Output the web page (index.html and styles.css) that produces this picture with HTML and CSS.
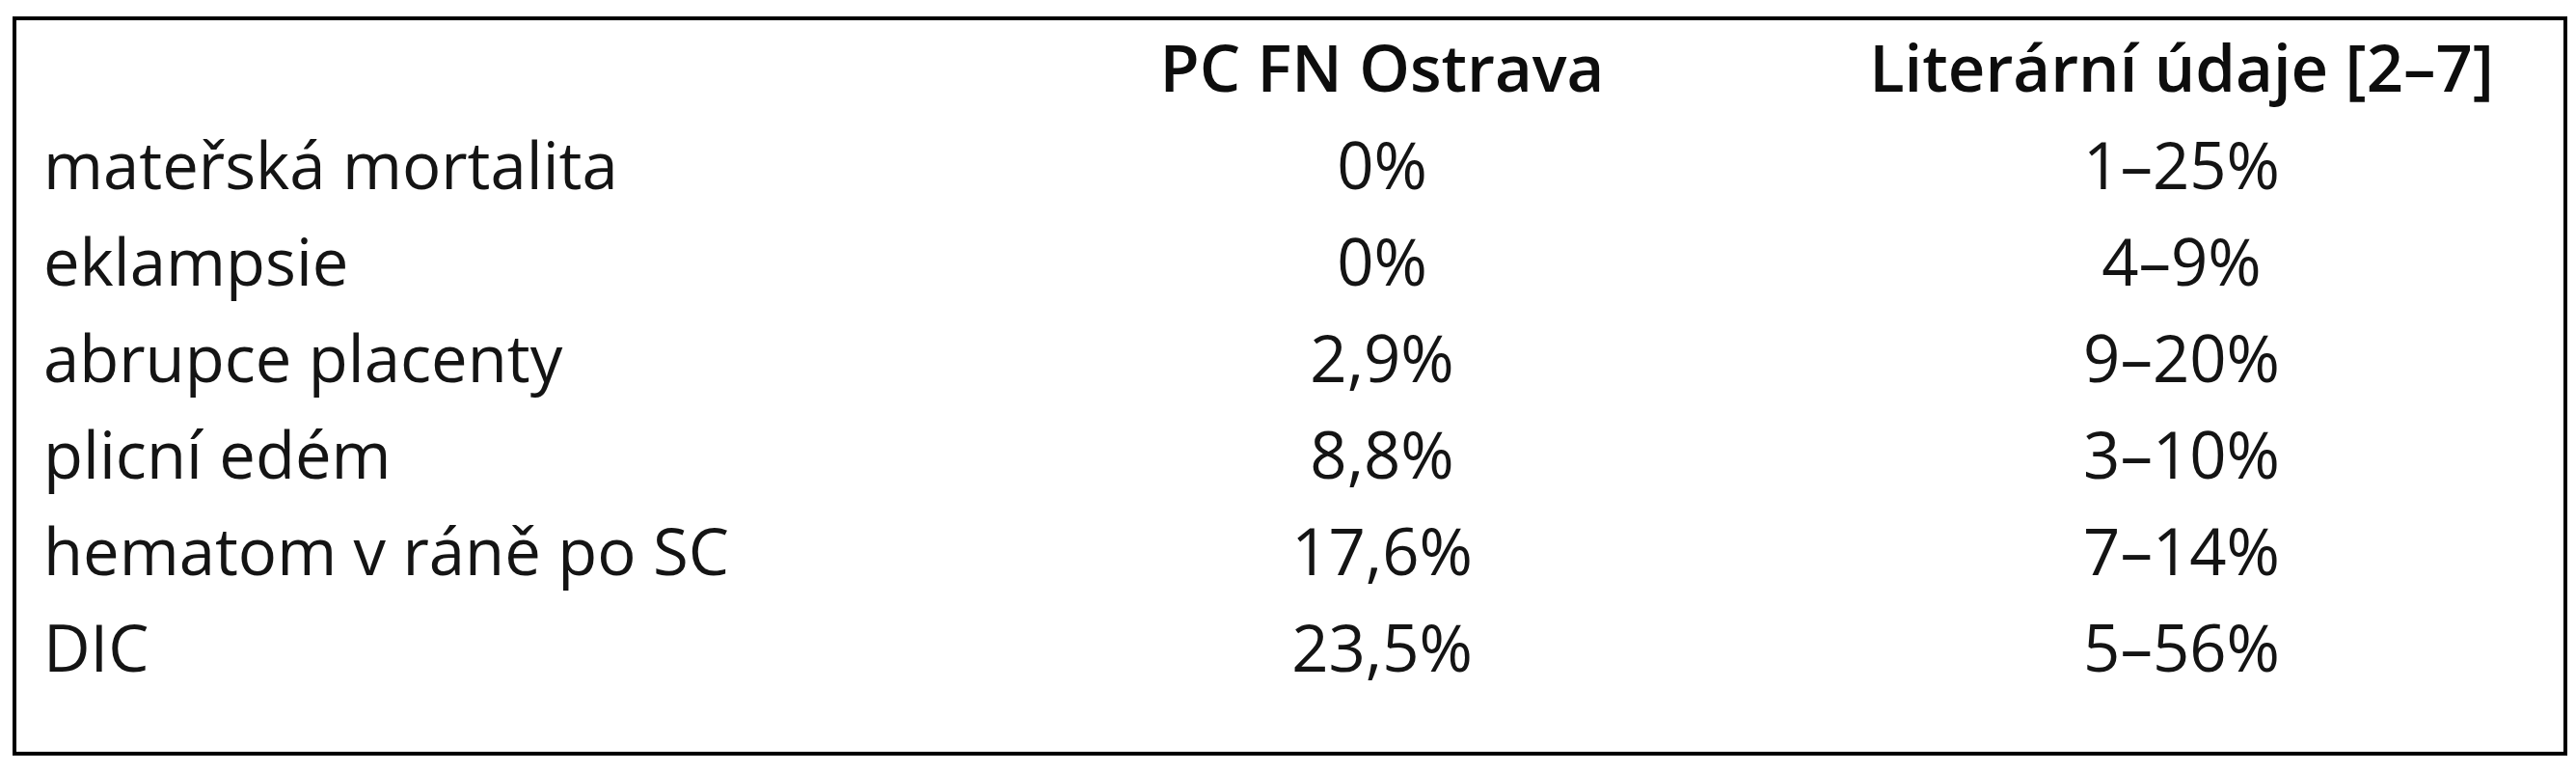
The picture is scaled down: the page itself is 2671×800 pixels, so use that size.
FILE: index.html
```html
<!DOCTYPE html>
<html lang="cs">
<head>
<meta charset="utf-8">
<title>Tabulka</title>
<link rel="stylesheet" href="styles.css">
</head>
<body>
<div class="frame">
  <div class="grid">
    <div class="cell label"></div>
    <div class="cell head">PC FN Ostrava</div>
    <div class="cell head">Literární údaje [2–7]</div>

    <div class="cell label">mateřská mortalita</div>
    <div class="cell val">0%</div>
    <div class="cell val">1–25%</div>

    <div class="cell label">eklampsie</div>
    <div class="cell val">0%</div>
    <div class="cell val">4–9%</div>

    <div class="cell label">abrupce placenty</div>
    <div class="cell val">2,9%</div>
    <div class="cell val">9–20%</div>

    <div class="cell label">plicní edém</div>
    <div class="cell val">8,8%</div>
    <div class="cell val">3–10%</div>

    <div class="cell label">hematom v ráně po SC</div>
    <div class="cell val">17,6%</div>
    <div class="cell val">7–14%</div>

    <div class="cell label">DIC</div>
    <div class="cell val">23,5%</div>
    <div class="cell val">5–56%</div>
  </div>
</div>
</body>
</html>
```

FILE: styles.css
```css
html, body {
  margin: 0;
  padding: 0;
  background: #ffffff;
}

body {
  font-family: "Open Sans", "DejaVu Sans", sans-serif;
  color: #141414;
}

.frame {
  box-sizing: border-box;
  margin: 17px 0 0 13px;
  width: 2649px;
  height: 766px;
  border: 4px solid #000000;
  padding: 0 0 0 28px;
}

.grid {
  display: grid;
  grid-template-columns: 939px 760px 760px;
  column-gap: 69px;
  grid-auto-rows: 100px;
}

.cell {
  font-size: 67px;
  line-height: 98px;
  white-space: nowrap;
}

.label {
  text-align: left;
}

.head {
  text-align: center;
  font-weight: 600;
  color: #0d0d0d;
  line-height: 96px;
}

.val {
  text-align: center;
}
```
